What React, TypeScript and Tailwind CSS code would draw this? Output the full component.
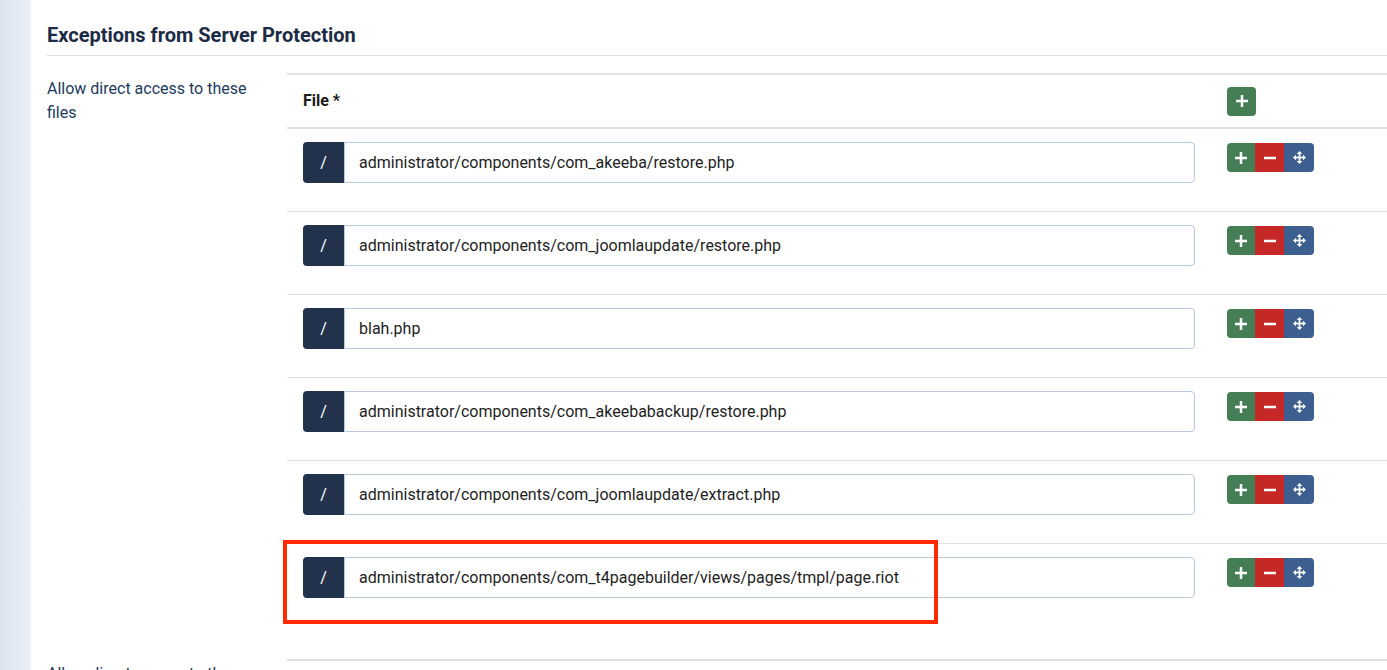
import React from "react";

const rows = [
  "administrator/components/com_akeeba/restore.php",
  "administrator/components/com_joomlaupdate/restore.php",
  "blah.php",
  "administrator/components/com_akeebabackup/restore.php",
  "administrator/components/com_joomlaupdate/extract.php",
  "administrator/components/com_t4pagebuilder/views/pages/tmpl/page.riot",
];

function Plus() {
  return (
    <svg width="12" height="12" viewBox="0 0 12 12">
      <rect x="4.75" y="0" width="2.5" height="12" fill="white" />
      <rect x="0" y="4.75" width="12" height="2.5" fill="white" />
    </svg>
  );
}

function Minus() {
  return (
    <svg width="12" height="12" viewBox="0 0 12 12">
      <rect x="0" y="4.75" width="12" height="2.5" fill="white" />
    </svg>
  );
}

function Move() {
  return (
    <svg width="13" height="13" viewBox="0 0 12 12" fill="white">
      <rect x="5.2" y="1.5" width="1.6" height="9" />
      <rect x="1.5" y="5.2" width="9" height="1.6" />
      <path d="M6 0 L8.6 2.8 L3.4 2.8 Z" />
      <path d="M6 12 L8.6 9.2 L3.4 9.2 Z" />
      <path d="M0 6 L2.8 3.4 L2.8 8.6 Z" />
      <path d="M12 6 L9.2 3.4 L9.2 8.6 Z" />
    </svg>
  );
}

export default function App() {
  return (
    <div
      className="flex h-[670px] w-[1387px] overflow-hidden bg-white"
      style={{ fontFamily: "Roboto, 'Noto Sans', sans-serif" }}
    >
      <div className="w-[31px] shrink-0 bg-gradient-to-r from-[#dce4ef] to-[#ecf0f6]" />
      <div className="flex-1 pl-4 pt-[21px]">
        <h2 className="text-[20px] font-bold leading-[28px] text-[#1c2b45] pb-[6px] border-b border-[#dde1e5]">
          Exceptions from Server Protection
        </h2>

        <div className="mt-[17px] flex">
          <div className="w-[240px] shrink-0 pt-[4px] pr-4 text-[16px] leading-6 text-[#223a60]">
            Allow direct access to these files
          </div>
          <div className="relative flex-1">
            <div className="border-t-2 border-[#dee2e6]">
              <div className="flex h-[54px] items-center border-b-2 border-[#dee2e6]">
                <div className="flex-1 pl-4 text-[16px] font-bold text-[#1a1a1a]">File *</div>
                <div className="w-[176px] pl-4">
                  <button className="flex h-[29px] w-[29px] items-center justify-center rounded bg-[#457d54]">
                    <Plus />
                  </button>
                </div>
              </div>
              {rows.map((r, i) => (
                <div
                  key={i}
                  className={
                    "flex pt-[13px] pb-[28px] " +
                    (i < rows.length - 1 ? "border-b border-[#dfe3e8]" : "")
                  }
                >
                  <div className="flex flex-1 pl-4">
                    <div className="flex h-[41px] w-[41px] items-center justify-center rounded-l bg-[#22324c] text-[16px] text-white">
                      /
                    </div>
                    <div className="flex h-[41px] w-[851px] items-center rounded-r border border-[#b9c8de] pl-[14px] text-[16px] text-[#1e1e1e]">
                      {r}
                    </div>
                  </div>
                  <div className="w-[176px] pl-4 pt-[1px]">
                    <div className="flex h-[29px] w-[87px] overflow-hidden rounded">
                      <div className="flex w-[28px] items-center justify-center bg-[#457d54]">
                        <Plus />
                      </div>
                      <div className="flex w-[29px] items-center justify-center bg-[#c52827]">
                        <Minus />
                      </div>
                      <div className="flex w-[30px] items-center justify-center bg-[#3c5f8f]">
                        <Move />
                      </div>
                    </div>
                  </div>
                </div>
              ))}
            </div>
            <div className="pointer-events-none absolute left-[-4px] top-[467px] h-[84px] w-[655px] border-4 border-[#ff2a00]" />
          </div>
        </div>

        <div className="mt-[33px] flex">
          <div className="w-[240px] shrink-0 pt-[3px] pr-4 text-[16px] leading-6 text-[#223a60]">
            Allow direct access to these folders
          </div>
          <div className="flex-1 border-t-2 border-[#dee2e6] h-[40px]" />
        </div>
      </div>
    </div>
  );
}
